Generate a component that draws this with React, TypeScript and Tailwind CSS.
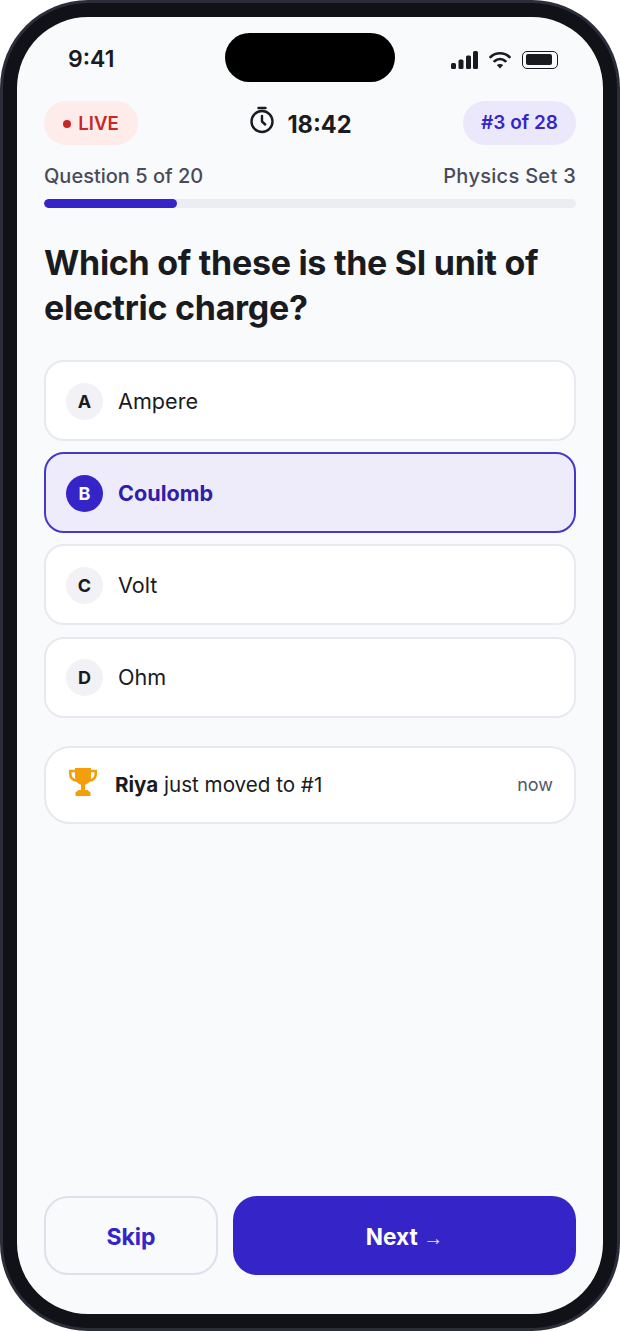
const options = [
  { letter: "A", label: "Ampere" },
  { letter: "B", label: "Coulomb", selected: true },
  { letter: "C", label: "Volt" },
  { letter: "D", label: "Ohm" },
];

function StatusIcons() {
  return (
    <div className="flex items-center gap-[11px]">
      <svg width="27" height="18" viewBox="0 0 27 18" fill="#1a1b20">
        <rect x="0" y="12" width="5" height="6" rx="1.5" />
        <rect x="7.5" y="8.5" width="5" height="9.5" rx="1.5" />
        <rect x="15" y="4.5" width="5" height="13.5" rx="1.5" />
        <rect x="22" y="0" width="5" height="18" rx="1.5" />
      </svg>
      <svg width="22" height="18" viewBox="0 0 22 18" fill="none" stroke="#1a1b20" strokeWidth="2.6" strokeLinecap="round">
        <path d="M1.5 6C6.8 1 15.2 1 20.5 6" />
        <path d="M5.5 10.2c3-2.9 8-2.9 11 0" />
        <path d="M7.8 14 11 17.5 14.2 14c-1.8-1.4-4.6-1.4-6.4 0z" fill="#1a1b20" stroke="none" />
      </svg>
      <div className="flex h-[18px] w-[36px] items-center rounded-[5px] border-[1.5px] border-[#1a1b20] p-[2.5px]">
        <div className="h-full w-[26px] rounded-[2px] bg-[#1a1b20]" />
      </div>
    </div>
  );
}

function TimerIcon() {
  return (
    <svg className="mb-[6px]" width="26" height="28" viewBox="0 0 26 28" fill="none" stroke="#1a1b20" strokeWidth="2.4" strokeLinecap="round" strokeLinejoin="round">
      <path d="M9.5 2h7" />
      <circle cx="13" cy="15.5" r="10.5" />
      <path d="M13 10v5.5l3.2 3" />
    </svg>
  );
}

function TrophyIcon() {
  return (
    <svg className="mb-[5px]" width="28" height="28" viewBox="0 0 28 28" fill="#f59e0b">
      <path d="M6 0h16v9a8 8 0 0 1-16 0z" />
      <path d="M6 3H1.3v3c0 3.6 2.6 6.2 6.7 6.8" fill="none" stroke="#f59e0b" strokeWidth="2.6" />
      <path d="M22 3h4.7v3c0 3.6-2.6 6.2-6.7 6.8" fill="none" stroke="#f59e0b" strokeWidth="2.6" />
      <rect x="12" y="16" width="4" height="8" />
      <path d="M9.5 22h9l3 2.5V28h-15v-3.5z" />
    </svg>
  );
}

function OptionRow({ letter, label, selected }: { letter: string; label: string; selected?: boolean }) {
  return (
    <div
      className={
        "flex h-[81px] items-center gap-[15px] rounded-[20px] border-2 pl-[20px] pt-[1px] " +
        (selected ? "border-[#4538c8] bg-[#eeebfb]" : "border-[#e8e9ef] bg-white")
      }
    >
      <span
        className={
          "flex h-[37px] w-[37px] items-center justify-center rounded-full text-[18px] font-bold " +
          (selected ? "bg-[#3525c8] text-white" : "bg-[#f1f1f6] text-[#1a1b20]")
        }
      >
        {letter}
      </span>
      <span className={"text-[21.6px] " + (selected ? "font-bold text-[#2f1fa8]" : "text-[#1a1b20]")}>{label}</span>
    </div>
  );
}

export default function App() {
  return (
    <div className="h-[1331px] w-[620px] bg-white font-['Inter',sans-serif]">
      <div className="h-full rounded-[88px] bg-[#2b2e39] p-[3px]">
        <div className="h-full rounded-[85px] bg-[#101217] p-[14px]">
          <div className="relative flex h-full flex-col rounded-[71px] bg-[#f9fafc] px-[27px] pb-[39px]">
            <div className="absolute left-[208px] top-[16px] h-[49px] w-[170px] rounded-full bg-black" />

            <div className="flex h-[84px] items-center justify-between pl-[24px] pr-[18px] pt-[1px]">
              <span className="text-[23px] font-semibold text-[#1a1b20]">9:41</span>
              <StatusIcons />
            </div>

            <div className="flex h-[44px] items-center justify-between">
              <div className="flex h-full w-[94px] items-center justify-center gap-[7px] rounded-full bg-[#fdecea] pt-[1px] text-[18.6px] font-semibold text-[#c62828]">
                <span className="h-[8px] w-[8px] rounded-full bg-[#c62828]" />
                LIVE
              </div>
              <div className="flex items-center gap-[12px] text-[23.6px] font-bold text-[#1a1b20]">
                <TimerIcon />
                <span className="mt-[3px]">18:42</span>
              </div>
              <div className="flex h-full w-[113px] items-center justify-center rounded-full bg-[#ebe8fb] text-[19px] font-semibold text-[#3525c8]">
                #3 of 28
              </div>
            </div>

            <div className="mt-[17px] flex items-center justify-between text-[20px] font-medium leading-[28px] text-[#4a4b5a]">
              <span>Question 5 of 20</span>
              <span className="tracking-[0.3px]">Physics Set 3</span>
            </div>
            <div className="mt-[9px] h-[9px] overflow-hidden rounded-full bg-[#ecedf2]">
              <div className="h-full w-1/4 rounded-full bg-[#3525c8]" />
            </div>

            <h1 className="mt-[32px] text-[34px] font-bold leading-[45px] tracking-[-0.28px] text-[#1a1b20]">
              Which of these is the SI unit of electric charge?
            </h1>

            <div className="mt-[30px] flex flex-col gap-[11.2px]">
              {options.map((o) => (
                <OptionRow key={o.letter} {...o} />
              ))}
            </div>

            <div className="mt-[28.4px] flex h-[78px] items-center gap-[18px] rounded-[26px] border-2 border-[#e8e9ef] bg-white pl-[23px] pr-[21px]">
              <TrophyIcon />
              <p className="flex-1 pt-[1px] text-[20.6px] text-[#1a1b20]">
                <span className="font-bold">Riya</span> just moved to #1
              </p>
              <span className="text-[18px] text-[#55566a]">now</span>
            </div>

            <div className="mt-auto flex h-[79px] gap-[15px]">
              <button className="w-[174px] rounded-[24px] border-2 border-[#e0e0ec] pt-[3px] text-[23px] font-bold text-[#3525c8]">
                Skip
              </button>
              <button className="flex-1 rounded-[24px] bg-[#3525c8] pt-[3px] text-[22.6px] font-bold text-white">
                Next <span className="font-['Liberation_Sans',sans-serif] text-[20px] font-normal text-[#e6e4fa]">→</span>
              </button>
            </div>
          </div>
        </div>
      </div>
    </div>
  );
}
